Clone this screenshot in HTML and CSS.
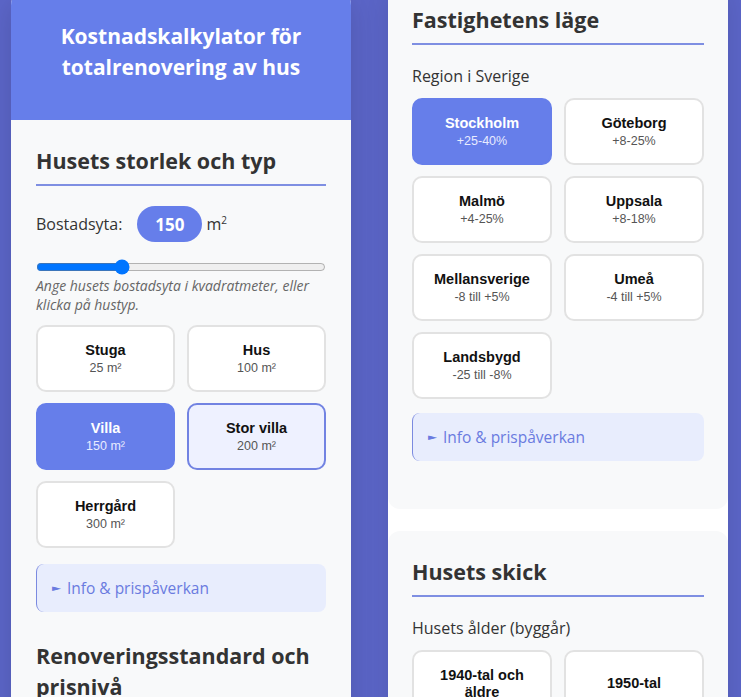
FILE: index.html
```html
<!DOCTYPE html>
<html lang="sv">
<head>
<meta charset="utf-8">
<title>Kostnadskalkylator</title>
<link rel="stylesheet" href="styles.css">
</head>
<body>
<div class="layout">
  <div class="panel">
    <header class="panel-header">
      <h1>Kostnadskalkylator för totalrenovering av hus</h1>
    </header>
    <div class="panel-body">
      <section class="group">
        <h2 class="section-title">Husets storlek och typ</h2>
        <div class="size-row">
          <span class="label">Bostadsyta:</span>
          <span class="size-pill">150</span>
          <span class="unit">m<sup>2</sup></span>
        </div>
        <input class="slider" type="range" min="10" max="500" value="150">
        <p class="hint">Ange husets bostadsyta i kvadratmeter, eller klicka på hustyp.</p>
        <div class="options">
          <div class="option"><div class="opt-title">Stuga</div><div class="opt-sub">25 m²</div></div>
          <div class="option"><div class="opt-title">Hus</div><div class="opt-sub">100 m²</div></div>
          <div class="option selected"><div class="opt-title">Villa</div><div class="opt-sub">150 m²</div></div>
          <div class="option hover"><div class="opt-title">Stor villa</div><div class="opt-sub">200 m²</div></div>
          <div class="option"><div class="opt-title">Herrgård</div><div class="opt-sub">300 m²</div></div>
        </div>
        <div class="info"><span class="tri">►</span>Info &amp; prispåverkan</div>
      </section>
      <section class="group">
        <h2 class="section-title plain">Renoveringsstandard och prisnivå</h2>
      </section>
    </div>
  </div>

  <div class="side">
    <section class="card-section">
      <h2 class="section-title">Fastighetens läge</h2>
      <div class="label block">Region i Sverige</div>
      <div class="options">
        <div class="option selected"><div class="opt-title">Stockholm</div><div class="opt-sub">+25-40%</div></div>
        <div class="option"><div class="opt-title">Göteborg</div><div class="opt-sub">+8-25%</div></div>
        <div class="option"><div class="opt-title">Malmö</div><div class="opt-sub">+4-25%</div></div>
        <div class="option"><div class="opt-title">Uppsala</div><div class="opt-sub">+8-18%</div></div>
        <div class="option"><div class="opt-title">Mellansverige</div><div class="opt-sub">-8 till +5%</div></div>
        <div class="option"><div class="opt-title">Umeå</div><div class="opt-sub">-4 till +5%</div></div>
        <div class="option"><div class="opt-title">Landsbygd</div><div class="opt-sub">-25 till -8%</div></div>
      </div>
      <div class="info"><span class="tri">►</span>Info &amp; prispåverkan</div>
    </section>
    <section class="card-section">
      <h2 class="section-title">Husets skick</h2>
      <div class="label block">Husets ålder (byggår)</div>
      <div class="options">
        <div class="option"><div class="opt-title">1940-tal och äldre</div></div>
        <div class="option"><div class="opt-title">1950-tal</div></div>
      </div>
    </section>
  </div>
</div>
</body>
</html>
```
FILE: styles.css
```css
* { box-sizing: border-box; }
html, body { margin: 0; padding: 0; }
body {
  background: #5c66c9;
  font-family: "Open Sans", "Noto Sans", sans-serif;
  color: #333;
  overflow: hidden;
  height: 697px;
}
.layout {
  display: grid;
  grid-template-columns: 340px 340px;
  column-gap: 37px;
  padding-left: 11px;
  margin-top: -10px;
  align-items: start;
}
.panel {
  border-radius: 15px;
  overflow: hidden;
  background: #f8f9fa;
  box-shadow: 0 10px 30px rgba(0,0,0,0.15);
}
.panel-header {
  background: #667eea;
  padding: 31px 20px 37px;
  text-align: center;
}
.panel-header h1 {
  margin: 0;
  color: #fff;
  font-size: 21px;
  line-height: 31px;
  font-weight: 700;
}
.panel-body {
  padding: 25px 25px 40px;
}
.group + .group { margin-top: 28px; }
.section-title {
  margin: 0 0 20px;
  font-size: 21.5px;
  line-height: 31px;
  font-weight: 700;
  color: #333;
  padding-bottom: 8px;
  border-bottom: 2px solid #7f8fe2;
}
.section-title.plain { border-bottom: none; }
.size-row {
  display: flex;
  align-items: center;
  height: 36px;
}
.label { font-size: 16px; color: #333; line-height: 22px; }
.label.block { margin-bottom: 11px; }
.size-pill {
  margin-left: 15px;
  width: 65px;
  height: 36px;
  border-radius: 18px;
  background: #667eea;
  color: #fff;
  font-weight: 700;
  font-size: 17px;
  display: flex;
  align-items: center;
  justify-content: center;
}
.unit { margin-left: 4px; font-size: 16px; }
.unit sup { font-size: 10px; }
.slider {
  display: block;
  width: 100%;
  margin: 17px 0 1px;
}
.hint {
  margin: 0 0 11px;
  font-size: 14px;
  line-height: 19px;
  font-style: italic;
  color: #666;
}
.options {
  display: grid;
  grid-template-columns: 1fr 1fr;
  gap: 11px 12px;
}
.option {
  background: #fff;
  border: 2px solid #e2e2e2;
  border-radius: 10px;
  min-height: 67px;
  padding: 14px 15px;
  text-align: center;
  font-family: "Liberation Sans", Arial, sans-serif;
  display: flex;
  flex-direction: column;
  justify-content: center;
}
.opt-title {
  font-size: 14.5px;
  line-height: 16.5px;
  font-weight: 700;
  color: #111;
}
.opt-sub {
  margin-top: 2px;
  font-size: 12.5px;
  line-height: 14px;
  color: #555;
}
.option.selected {
  background: #667eea;
  border-color: #667eea;
}
.option.selected .opt-title { color: #fff; }
.option.selected .opt-sub { color: #e8ebff; }
.option.hover {
  background: #eef1ff;
  border-color: #7283e2;
}
.info {
  margin-top: 16px;
  height: 48px;
  background: #e8edfd;
  border-left: 1px solid #7b8ae0;
  border-radius: 8px;
  padding: 0 16px;
  display: flex;
  align-items: center;
  color: #6a7be0;
  font-size: 15.5px;
}
.tri {
  font-family: "DejaVu Sans", sans-serif;
  font-size: 9px;
  margin-right: 7px;
  color: #6a7be0;
  transform: scaleX(1.3);
}
.side {
  margin-top: -11px;
  background: #fff;
  box-shadow: 0 10px 30px rgba(0,0,0,0.12);
}
.card-section {
  background: #f8f9fa;
  border-radius: 12px;
  padding: 25px 24px 25px 24px;
}
.card-section + .card-section { margin-top: 22px; }
.card-section .info { margin-top: 14px; margin-bottom: 23px; }
```
